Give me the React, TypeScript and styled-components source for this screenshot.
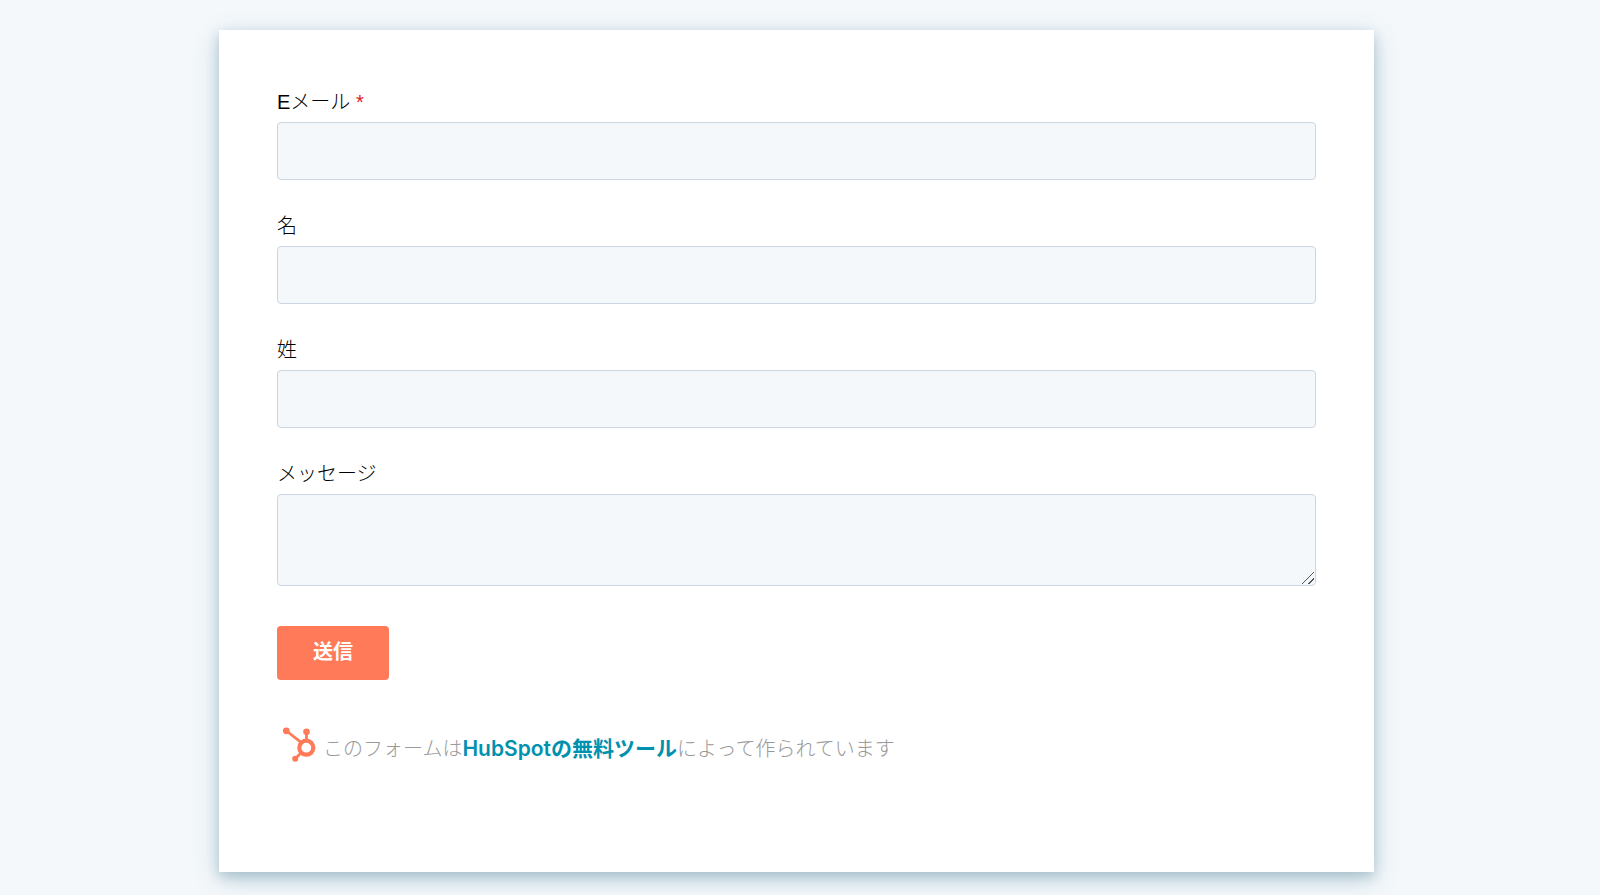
import React from "react";
import styled, { createGlobalStyle } from "styled-components";

const GlobalStyle = createGlobalStyle`
  * { box-sizing: border-box; }
  body {
    margin: 0;
    background: #f4f8fb;
    font-family: "Liberation Sans", "Noto Sans CJK JP", sans-serif;
    font-size: 20px;
    line-height: 28px;
    color: #000;
  }
`;

const Page = styled.main`
  display: flex;
  justify-content: center;
  padding: 30px 31px 23px 24px;
`;

const Card = styled.section`
  width: 100%;
  max-width: 1155px;
  min-height: 842px;
  padding: 58px;
  background: #fff;
  box-shadow: 0 7px 26px rgba(0, 90, 115, 0.18), 0 5px 12px rgba(0, 70, 100, 0.22);
`;

const Form = styled.form`
  display: flex;
  flex-direction: column;
  gap: 32px;
`;

const Field = styled.div`
  display: flex;
  flex-direction: column;
  gap: 6px;
`;

const Label = styled.label`
  height: 28px;
  font-weight: 300;
`;

const Required = styled.span`
  color: #e51520;
`;

const TextInput = styled.input`
  width: 100%;
  height: 58px;
  padding: 0 16px;
  border: 1px solid #cbd6e2;
  border-radius: 4px;
  background: #f5f8fb;
  font: inherit;
`;

const TextArea = styled.textarea`
  display: block;
  width: 100%;
  height: 92px;
  padding: 12px 16px;
  border: 1px solid #cbd6e2;
  border-radius: 4px;
  background: #f5f8fb;
  font: inherit;
  resize: vertical;

  &::-webkit-resizer {
    background: linear-gradient(
        135deg,
        transparent 46%,
        #555 46%,
        #555 54%,
        transparent 54%,
        transparent 72%,
        #555 72%,
        #555 80%,
        transparent 80%
      )
      2px 2px / 12px 12px no-repeat;
  }
`;

const SubmitButton = styled.button`
  align-self: flex-start;
  width: 112px;
  height: 54px;
  margin-top: 8px;
  padding: 0 0 2px;
  border: 0;
  border-radius: 4px;
  background: #ff7a59;
  color: #fff;
  font: inherit;
  font-weight: 700;
  cursor: pointer;
`;

const Credit = styled.footer`
  display: flex;
  align-items: center;
  gap: 5px;
  margin-top: 45px;
  color: #999;
  font-weight: 300;
`;

const CreditText = styled.p`
  margin: 0;
  padding-top: 8px;
`;

const CreditLink = styled.a`
  color: #0091ae;
  font-family: Inter, "Noto Sans CJK JP", sans-serif;
  font-size: 21px;
  font-weight: 600;
  text-decoration: none;
`;

const Logo = styled.svg`
  flex: none;
  width: 36px;
  height: 40px;
  margin-left: 5px;
`;

const Sprocket = () => (
  <Logo viewBox="0 0 36 40" fill="none" stroke="#ff7a59" aria-hidden="true">
    <circle cx="24.3" cy="22.7" r="7" strokeWidth="4.2" />
    <path d="M4.5 6 18.5 16.8M24.5 7v9M19.2 27.8l-5.8 5.8" strokeWidth="2.8" />
    <circle cx="4.3" cy="5.8" r="3.4" fill="#ff7a59" stroke="none" />
    <circle cx="24.5" cy="6.8" r="3.3" fill="#ff7a59" stroke="none" />
    <circle cx="13.2" cy="33.8" r="3" fill="#ff7a59" stroke="none" />
  </Logo>
);

export default function App() {
  return (
    <>
      <GlobalStyle />
      <Page lang="ja">
        <Card>
          <Form onSubmit={(event) => event.preventDefault()}>
            <Field>
              <Label htmlFor="email">
                Eメール <Required>*</Required>
              </Label>
              <TextInput id="email" name="email" type="email" required />
            </Field>
            <Field>
              <Label htmlFor="firstname">名</Label>
              <TextInput id="firstname" name="firstname" type="text" />
            </Field>
            <Field>
              <Label htmlFor="lastname">姓</Label>
              <TextInput id="lastname" name="lastname" type="text" />
            </Field>
            <Field>
              <Label htmlFor="message">メッセージ</Label>
              <TextArea id="message" name="message" />
            </Field>
            <SubmitButton type="submit">送信</SubmitButton>
          </Form>
          <Credit>
            <Sprocket />
            <CreditText>
              このフォームは<CreditLink href="#">HubSpotの無料ツール</CreditLink>によって作られています
            </CreditText>
          </Credit>
        </Card>
      </Page>
    </>
  );
}
